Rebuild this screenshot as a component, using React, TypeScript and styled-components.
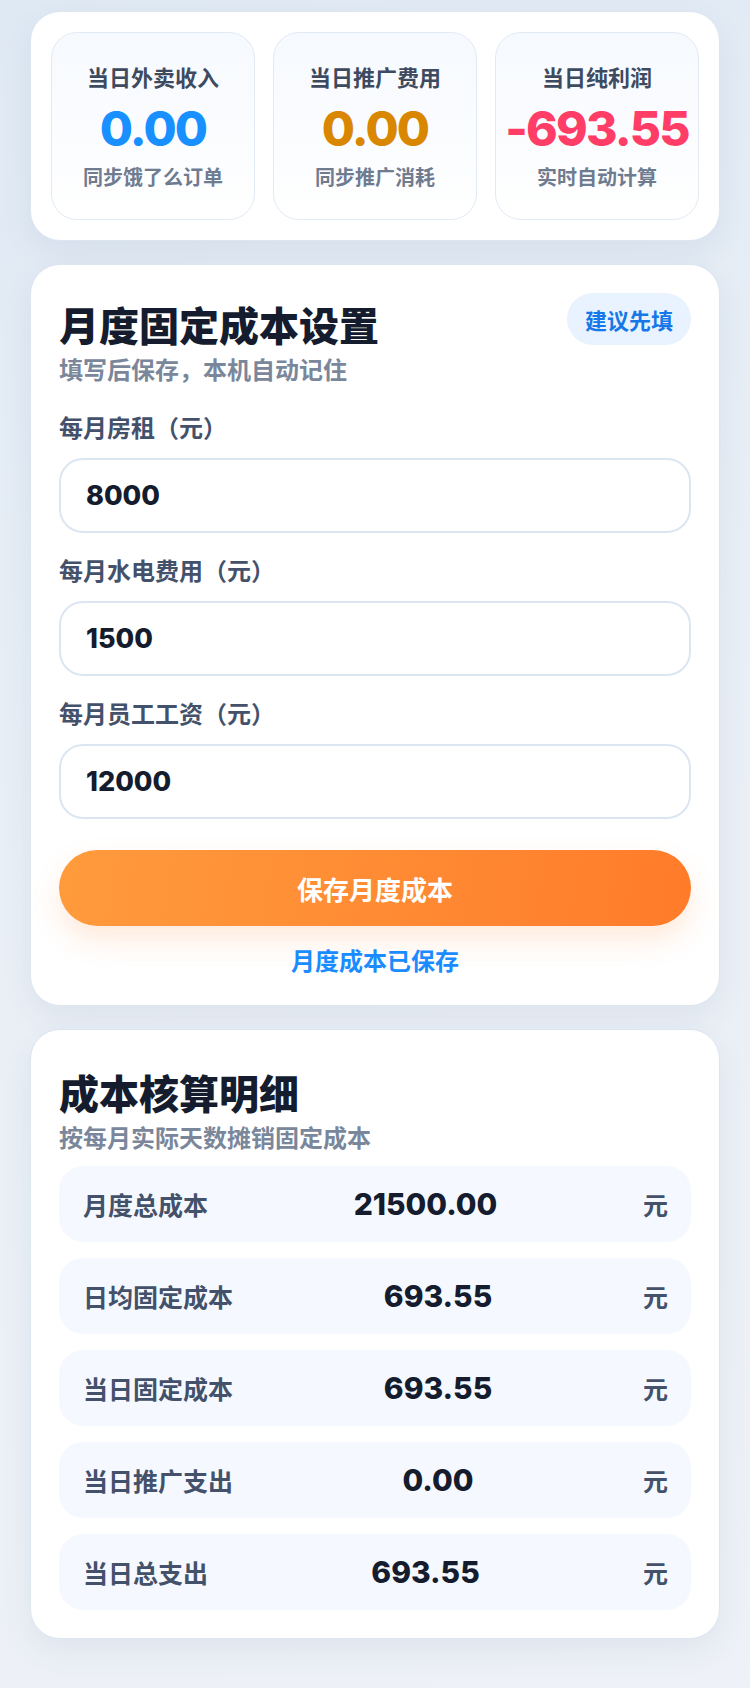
import React from 'react';
import styled, { createGlobalStyle } from 'styled-components';

const GlobalStyle = createGlobalStyle`
  * {
    box-sizing: border-box;
  }
  body {
    margin: 0;
    background: linear-gradient(160deg, #dfe9f4 0%, #e9eff6 45%, #eef1f7 100%);
    font-family: 'Noto Sans CJK SC', 'Noto Sans', sans-serif;
    min-height: 1688px;
  }
`;

const NUM_FONT = `'Inter', 'Noto Sans CJK SC', sans-serif`;

const Page = styled.div`
  width: 750px;
  padding: 11px 30px 50px;
  display: flex;
  flex-direction: column;
  gap: 23px;
`;

const Card = styled.section<{ $pad?: string }>`
  background: #ffffff;
  border: 1.5px solid #dce6f1;
  border-radius: 30px;
  padding: ${(props) => props.$pad || '28px'};
  box-shadow: 0 12px 32px rgba(40, 70, 120, 0.07);
`;

const StatGrid = styled.div`
  display: grid;
  grid-template-columns: repeat(3, 1fr);
  gap: 18px;
`;

const StatBox = styled.div`
  height: 188px;
  border-radius: 26px;
  border: 1.5px solid #e2eaf4;
  background: linear-gradient(180deg, #f6f9fe 0%, #ffffff 100%);
  display: flex;
  flex-direction: column;
  align-items: center;
  justify-content: center;
`;

const StatLabel = styled.div`
  font-size: 22px;
  line-height: 29px;
  font-weight: 700;
  color: #3d4a5f;
`;

const StatValue = styled.div<{ color: string }>`
  margin-top: 11px;
  font-family: ${NUM_FONT};
  font-size: 48px;
  line-height: 53px;
  font-weight: 800;
  letter-spacing: -1.8px;
  color: ${(props) => props.color};
  white-space: nowrap;
`;

const StatSub = styled.div`
  margin-top: 9px;
  font-size: 20px;
  line-height: 26px;
  font-weight: 700;
  color: #6f7c90;
`;

const Header = styled.div`
  display: flex;
  justify-content: space-between;
  align-items: flex-start;
`;

const TitleBlock = styled.div<{ $top: number }>`
  padding-top: ${(props) => props.$top}px;
`;

const Title = styled.h2`
  margin: 0;
  font-size: 40px;
  line-height: 58px;
  font-weight: 900;
  color: #141c2e;
`;

const Subtitle = styled.p`
  margin: -2px 0 0;
  font-size: 24px;
  line-height: 35px;
  font-weight: 700;
  color: #7a879b;
`;

const Badge = styled.span`
  display: inline-flex;
  align-items: center;
  justify-content: center;
  height: 52px;
  padding: 0 18px;
  border-radius: 26px;
  background: #e8f3ff;
  color: #1677e8;
  font-size: 22px;
  font-weight: 700;
`;

const Fields = styled.div`
  margin-top: 24px;
  display: flex;
  flex-direction: column;
  gap: 20px;
`;

const Field = styled.label`
  display: flex;
  flex-direction: column;
  gap: 14px;
`;

const FieldLabel = styled.span`
  font-size: 24px;
  line-height: 34px;
  font-weight: 700;
  color: #44516a;
`;

const Input = styled.input`
  height: 75px;
  width: 100%;
  border: 2px solid #dce6f2;
  border-radius: 24px;
  background: #ffffff;
  padding: 0 25px;
  font-family: ${NUM_FONT};
  font-size: 27px;
  font-weight: 800;
  color: #141c2e;
  outline: none;
`;

const SaveButton = styled.button`
  margin-top: 31px;
  width: 100%;
  height: 76px;
  border: none;
  border-radius: 38px;
  background: linear-gradient(100deg, #ff9b3c 0%, #ff8a33 55%, #ff7b2a 100%);
  box-shadow: 0 14px 28px rgba(255, 140, 60, 0.18);
  color: #ffffff;
  font-family: 'Noto Sans CJK SC', sans-serif;
  font-size: 26px;
  font-weight: 700;
  cursor: pointer;
`;

const SavedHint = styled.div`
  margin-top: 17px;
  text-align: center;
  font-size: 24px;
  line-height: 34px;
  font-weight: 700;
  color: #1a8cff;
`;

const RowList = styled.div`
  margin-top: 12px;
  display: flex;
  flex-direction: column;
  gap: 16px;
`;

const Row = styled.div`
  height: 76px;
  border-radius: 24px;
  background: #f5f9ff;
  padding: 0 23px 0 24px;
  display: flex;
  align-items: center;
`;

const RowLabel = styled.span`
  font-size: 25px;
  font-weight: 700;
  color: #44516a;
`;

const RowValue = styled.span`
  flex: 1;
  text-align: center;
  font-family: ${NUM_FONT};
  font-size: 30px;
  font-weight: 800;
  color: #141c2e;
`;

const RowUnit = styled.span`
  font-size: 25px;
  font-weight: 700;
  color: #44516a;
`;

const stats = [
  { label: '当日外卖收入', value: '0.00', sub: '同步饿了么订单', color: '#1890ff' },
  { label: '当日推广费用', value: '0.00', sub: '同步推广消耗', color: '#d98700' },
  { label: '当日纯利润', value: '-693.55', sub: '实时自动计算', color: '#ff3d66' },
];

const fields = [
  { label: '每月房租（元）', value: '8000' },
  { label: '每月水电费用（元）', value: '1500' },
  { label: '每月员工工资（元）', value: '12000' },
];

const details = [
  { label: '月度总成本', value: '21500.00' },
  { label: '日均固定成本', value: '693.55' },
  { label: '当日固定成本', value: '693.55' },
  { label: '当日推广支出', value: '0.00' },
  { label: '当日总支出', value: '693.55' },
];

export default function App() {
  return (
    <>
      <GlobalStyle />
      <Page>
        <Card $pad="20px">
          <StatGrid>
            {stats.map((s) => (
              <StatBox key={s.label}>
                <StatLabel>{s.label}</StatLabel>
                <StatValue color={s.color}>{s.value}</StatValue>
                <StatSub>{s.sub}</StatSub>
              </StatBox>
            ))}
          </StatGrid>
        </Card>

        <Card>
          <Header>
            <TitleBlock $top={2}>
              <Title>月度固定成本设置</Title>
              <Subtitle>填写后保存，本机自动记住</Subtitle>
            </TitleBlock>
            <Badge>建议先填</Badge>
          </Header>
          <Fields>
            {fields.map((f) => (
              <Field key={f.label}>
                <FieldLabel>{f.label}</FieldLabel>
                <Input type="text" defaultValue={f.value} />
              </Field>
            ))}
          </Fields>
          <SaveButton>保存月度成本</SaveButton>
          <SavedHint>月度成本已保存</SavedHint>
        </Card>

        <Card>
          <TitleBlock $top={5}>
            <Title>成本核算明细</Title>
            <Subtitle>按每月实际天数摊销固定成本</Subtitle>
          </TitleBlock>
          <RowList>
            {details.map((d) => (
              <Row key={d.label}>
                <RowLabel>{d.label}</RowLabel>
                <RowValue>{d.value}</RowValue>
                <RowUnit>元</RowUnit>
              </Row>
            ))}
          </RowList>
        </Card>
      </Page>
    </>
  );
}
